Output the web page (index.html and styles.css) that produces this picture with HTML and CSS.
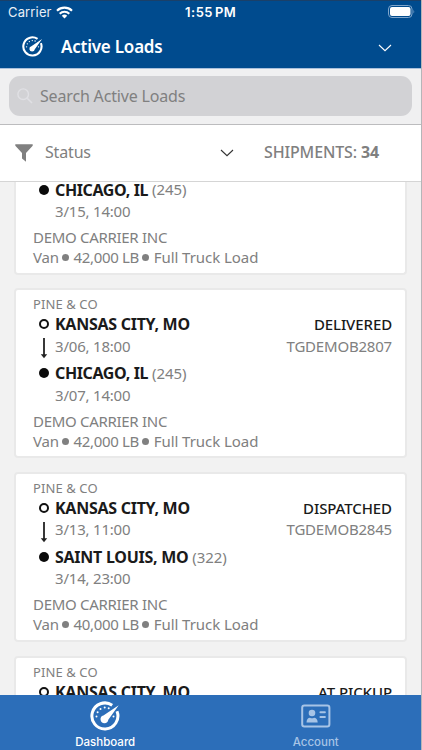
FILE: index.html
```html
<!DOCTYPE html>
<html lang="en">
<head>
<meta charset="utf-8">
<title>Active Loads</title>
<link rel="stylesheet" href="styles.css">
</head>
<body>
<svg class="defs" width="0" height="0" aria-hidden="true">
  <symbol id="gauge" viewBox="0 0 30 30">
    <path d="M22.2 4.2A13 13 0 1 0 27 10.2" fill="none" stroke="#fff" stroke-width="3"/>
    <path d="M28.7 4.2 18.3 18.8A3.9 3.9 0 1 1 13.4 14.5Z" fill="#fff"/>
    <g fill="#fff"><circle cx="6.5" cy="15.5" r="1"/><circle cx="7.6" cy="11.2" r="1"/><circle cx="10.5" cy="8" r="1"/><circle cx="14.7" cy="6.6" r="1"/><circle cx="18.7" cy="7.2" r="1"/><circle cx="23.5" cy="15.5" r="1"/></g>
  </symbol>
  <symbol id="chevron" viewBox="0 0 14 8"><path d="M1 1l6 5.7L13 1" fill="none" stroke="currentColor" stroke-width="1.1"/></symbol>
  <symbol id="arrow" viewBox="0 0 8 21"><path d="M4 0v18" stroke="#222" stroke-width="1.8"/><path d="M.8 16.3h6.4L4 20.2Z" fill="#222"/></symbol>
</svg>
<div class="screen">
  <header class="header">
    <div class="statusbar">
      <span class="carrier">Carrier</span>
      <svg class="wifi" viewBox="0 0 17 13"><g fill="none" stroke="#fff" stroke-width="2.1"><path d="M1 4.7a10.8 10.8 0 0 1 15 0"/><path d="M3.7 7.7a6.9 6.9 0 0 1 9.6 0"/></g><path d="M5.8 9.8a4 4 0 0 1 5.4 0L8.5 12.5Z" fill="#fff"/></svg>
      <span class="time">1:55 PM</span>
      <svg class="battery" viewBox="0 0 27 13"><rect x=".5" y=".5" width="23.5" height="12" rx="3.5" fill="none" stroke="#7fa5cb"/><rect x="2" y="2" width="20.5" height="9" rx="2" fill="#fff"/><path d="M25.5 4.5q1.3 2 0 4Z" fill="#7fa5cb"/></svg>
    </div>
    <div class="titlebar">
      <svg class="title-icon"><use href="#gauge"/></svg>
      <h1 class="title">Active Loads</h1>
      <svg class="chevron"><use href="#chevron"/></svg>
    </div>
  </header>
  <div class="search-wrap">
    <div class="search">
      <svg class="search-icon" viewBox="0 0 16 16"><circle cx="6.2" cy="6.2" r="5.3" fill="none" stroke="#e0e0e4" stroke-width="1.4"/><path d="M10.2 10.2 15 15" stroke="#e0e0e4" stroke-width="1.6"/></svg>
      <span class="search-text">Search Active Loads</span>
    </div>
  </div>
  <div class="filter">
    <svg class="funnel" viewBox="0 0 18 18"><path d="M.3.3h17.4v1.5L11 9v8.7L7 14.5V9L.3 1.8Z" fill="#808080"/></svg>
    <span class="filter-label">Status</span>
    <svg class="chevron"><use href="#chevron"/></svg>
    <span class="count">SHIPMENTS: <b class="count-value">34</b></span>
  </div>
  <main class="list">
    <article class="card partial">
      <div class="row city"><i class="disc"></i><b class="chicago">CHICAGO, IL</b><span class="miles">(245)</span></div>
      <div class="row date"><span class="when last">3/15, 14:00</span></div>
      <div class="company">DEMO CARRIER INC</div>
      <div class="row meta"><span class="van">Van</span><i class="dot"></i><span class="weight">42,000 LB</span><i class="dot"></i><span class="load">Full Truck Load</span></div>
    </article>
    <article class="card">
      <div class="shipper">PINE &amp; CO</div>
      <div class="row city"><i class="ring"></i><b class="origin">KANSAS CITY, MO</b><span class="state">DELIVERED</span></div>
      <div class="row date"><svg class="arrow"><use href="#arrow"/></svg><span class="when">3/06, 18:00</span><span class="ref">TGDEMOB2807</span></div>
      <div class="row city dest"><i class="disc"></i><b class="chicago">CHICAGO, IL</b><span class="miles">(245)</span></div>
      <div class="row date"><span class="when last">3/07, 14:00</span></div>
      <div class="company">DEMO CARRIER INC</div>
      <div class="row meta"><span class="van">Van</span><i class="dot"></i><span class="weight">42,000 LB</span><i class="dot"></i><span class="load">Full Truck Load</span></div>
    </article>
    <article class="card">
      <div class="shipper">PINE &amp; CO</div>
      <div class="row city"><i class="ring"></i><b class="origin">KANSAS CITY, MO</b><span class="state">DISPATCHED</span></div>
      <div class="row date"><svg class="arrow"><use href="#arrow"/></svg><span class="when">3/13, 11:00</span><span class="ref">TGDEMOB2845</span></div>
      <div class="row city dest"><i class="disc"></i><b class="louis">SAINT LOUIS, MO</b><span class="miles">(322)</span></div>
      <div class="row date"><span class="when last">3/14, 23:00</span></div>
      <div class="company">DEMO CARRIER INC</div>
      <div class="row meta"><span class="van">Van</span><i class="dot"></i><span class="weight">40,000 LB</span><i class="dot"></i><span class="load">Full Truck Load</span></div>
    </article>
    <article class="card">
      <div class="shipper">PINE &amp; CO</div>
      <div class="row city"><i class="ring"></i><b class="origin">KANSAS CITY, MO</b><span class="state">AT PICKUP</span></div>
    </article>
  </main>
  <nav class="tabs">
    <div class="tab active"><svg class="tab-icon"><use href="#gauge"/></svg><span class="tab-label">Dashboard</span></div>
    <div class="tab"><svg class="tab-icon" viewBox="0 0 30 30"><rect x="1.2" y="4.5" width="27.2" height="21" rx="2.2" fill="none" stroke="#a7c4e6" stroke-width="2"/><g fill="#a7c4e6"><circle cx="11" cy="12" r="3.3"/><path d="M5.5 21.5c0-3 1.5-4.7 3.5-4.7q2 1 4 0c2 0 3.7 1.7 3.7 4.7Z"/><rect x="18.5" y="10.3" width="6.3" height="2" rx=".8"/><rect x="18.5" y="15" width="6.3" height="2" rx=".8"/></g></svg><span class="tab-label">Account</span></div>
  </nav>
</div>
</body>
</html>
```
FILE: styles.css
```css
* { box-sizing: border-box; }
body { margin: 0; font-family: "Noto Sans", sans-serif; color: #808080; background: #f2f2f2; }
svg { display: block; flex: none; }
.defs { position: absolute; }
.screen { width: 422px; height: 750px; display: flex; flex-direction: column; overflow: hidden; border-right: 1px solid #b5b5b8; }

.header { height: 69px; flex: none; background: #004b8e; border-top: 1px solid #1a4069; border-bottom: 1px solid #a9c0dc; color: #fff; }
.statusbar { height: 23px; display: flex; align-items: center; padding: 0 6px 0 8px; font-family: Inter, sans-serif; font-size: 13px; }
.carrier { width: 44px; color: #e8eff6; letter-spacing: .15px; margin-top: -1px; }
.wifi { width: 17px; height: 13px; margin: -1px 0 0 4px; }
.time { margin: -1px 0 0 112px; font-weight: 600; white-space: nowrap; letter-spacing: .5px; word-spacing: -1.8px; }
.battery { width: 27px; height: 13px; margin: -2px 0 0 auto; }
.titlebar { height: 44px; display: flex; align-items: center; padding: 0 29px 0 22px; }
.title-icon { width: 21px; height: 21px; }
.title { margin: 2px 0 0 18px; font-size: 17px; font-weight: 600; line-height: 24px; letter-spacing: -.22px; }
.chevron { width: 14px; height: 8px; }
.titlebar .chevron { margin: 3px 0 0 auto; }

.search-wrap { height: 55px; flex: none; padding: 7px 9px 8px; background: #f0f0f1; }
.search { height: 40px; border-radius: 11px; background: #d2d2d5; display: flex; align-items: center; padding-left: 8px; }
.search-icon { width: 16px; height: 16px; margin-top: -1px; }
.search-text { margin-left: 7px; font-size: 16px; line-height: 22px; letter-spacing: -.17px; }

.filter { height: 58px; flex: none; display: flex; align-items: center; background: #fff; border-top: 1px solid #bcbcbe; border-bottom: 1px solid #d5d5d5; padding-left: 15px; font-size: 16px; line-height: 22px; }
.funnel { width: 18px; height: 18px; }
.filter-label { width: 175px; margin: -2px 0 0 12px; letter-spacing: -.17px; }
.filter .chevron { color: #333; margin-top: 0; }
.count { margin: -2px 0 0 30px; font-weight: 500; white-space: pre; letter-spacing: -.15px; }
.count-value { font-weight: 700; }

.list { flex: 1; min-height: 0; overflow: hidden; background: #f2f2f2; display: flex; flex-direction: column; gap: 13.7px; padding: 0 14px; }
.card { height: 170px; flex: none; background: #fff; border: 2px solid #e9e9e9; border-radius: 4px; padding: 4.2px 13px 0 17px; font-size: 15px; line-height: 20px; white-space: nowrap; letter-spacing: -.2px; }
.card.partial { height: 92.6px; border-top: 0; border-radius: 0 0 4px 4px; padding-top: 0; }
.partial .city { margin-top: -2.4px; }
.shipper { font-size: 13px; letter-spacing: .1px; }
.row { display: flex; align-items: center; padding-left: 6px; }
.city { height: 20px; font-size: 16px; }
.city b { margin-left: 6px; color: #1a1a1a; font-weight: 700; letter-spacing: -.27px; }
.city .chicago { letter-spacing: -.38px; }
.dest { margin-top: 6.6px; }
.ring { width: 10px; height: 10px; border: 2px solid #111; border-radius: 50%; }
.disc { width: 10px; height: 10px; border-radius: 50%; background: #0a0a0a; }
.state { margin-left: auto; color: #1a1a1a; font-size: 15px; font-weight: 500; letter-spacing: -.1px; }
.miles { margin: -1px 0 0 4px; font-size: 15px; letter-spacing: -.1px; }
.date { height: 22.4px; }
.arrow { width: 8px; height: 21px; margin: 6px 0 0 1px; }
.when { margin-left: 7px; }
.when.last { margin-left: 16px; }
.ref { margin-left: auto; }
.company { margin-top: 4.8px; letter-spacing: -.3px; }
.meta { padding-left: 0; }
.weight { letter-spacing: -.35px; }
.load { letter-spacing: -.05px; }
.dot { width: 7px; height: 7px; margin: 1px 4.3px 0 3.5px; border-radius: 50%; background: #808080; }

.tabs { height: 55px; flex: none; display: flex; background: #2c6eb9; color: #a7c4e6; font-family: Inter, sans-serif; font-size: 11.5px; font-weight: 500; }
.tab { flex: 1; display: flex; flex-direction: column; align-items: center; padding-top: 6px; }
.tab.active { color: #fff; }
.tab-icon { width: 30px; height: 30px; }
.tab-label { margin-top: 4px; line-height: 14px; }
```
